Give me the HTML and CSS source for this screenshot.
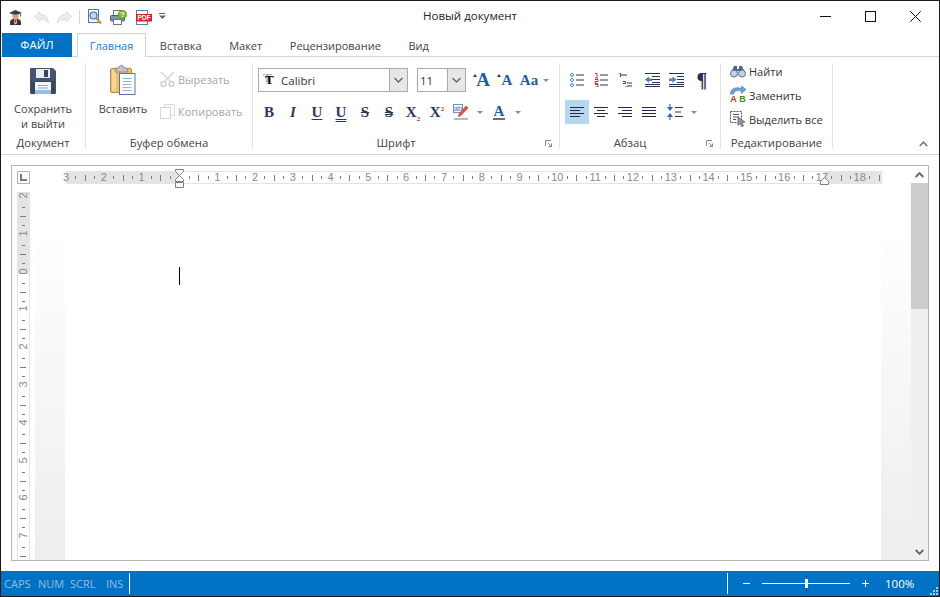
FILE: index.html
```html
<!DOCTYPE html>
<html lang="ru">
<head>
  <meta charset="UTF-8" />
  <title>Новый документ</title>
  <link rel="stylesheet" href="styles.css">
</head>
<body>
  <div class="window">

    <!-- title bar -->
    <div class="titlebar">
      <div class="qat">
        <svg class="qat-user" width="13" height="15" viewBox="0 0 13 15">
          <path d="M0 3 6.500 0 13 3 6.500 5.500z" fill="#3c3c44"/>
          <path d="M3.500 4.500h6v3.500a3 3 0 0 1-6 0z" fill="#d9a27e"/>
          <path d="M1 15v-3c0-2 2-3 3.500-3h4c1.500 0 3.500 1 3.500 3v3z" fill="#33363f"/>
          <path d="M5.500 9h2l.5 4-1.500 1.500L5 13z" fill="#e6e6e6"/>
          <path d="M6 9.500h1l.3 3-.8.800-.8-.800z" fill="#a5352b"/>
          <path d="M11.500 3.500v3" stroke="#8a6a3a" fill="none"/>
        </svg>
        <svg class="qat-undo" width="15" height="13" viewBox="0 0 15 13">
          <path d="M.5 5.500 6 .5v3c5 0 8 2.500 8.500 8.500-1.500-3-4-4-8.500-4v3z" fill="#eeeeee" stroke="#dcdcdc"/>
        </svg>
        <svg class="qat-redo" width="15" height="13" viewBox="0 0 15 13">
          <path d="M14.500 5.500 9 .5v3c-5 0-8 2.500-8.500 8.500 1.500-3 4-4 8.500-4v3z" fill="#eeeeee" stroke="#dcdcdc"/>
        </svg>
        <span class="qat-sep"></span>
        <svg class="qat-preview" width="14" height="16" viewBox="0 0 14 16">
          <rect x=".5" y=".5" width="10" height="13" fill="#fff" stroke="#4f76a8"/>
          <circle cx="5.500" cy="6.500" r="3.500" fill="#bcdcf2" stroke="#3f6ea5" stroke-width="1.200"/>
          <path d="M8.500 9.500 13 14.500" stroke="#c98a3a" stroke-width="2"/>
        </svg>
        <svg class="qat-print" width="17" height="15" viewBox="0 0 17 15">
          <rect x="3.500" y=".5" width="8" height="5" fill="#fff" stroke="#6b7a8f"/>
          <rect x=".5" y="5.500" width="14" height="5.500" rx="1" fill="#8495aa" stroke="#4d5d74"/>
          <rect x="3.500" y="9.500" width="8" height="5" fill="#fff" stroke="#6b7a8f"/>
          <circle cx="12.500" cy="4.500" r="4.300" fill="#76b82a" stroke="#4f8a16" stroke-width=".6"/>
          <text x="12.500" y="7.300" class="svg-q">?</text>
        </svg>
        <svg class="qat-pdf" width="16" height="15" viewBox="0 0 16 15">
          <rect x=".5" y=".5" width="11" height="14" fill="#fff" stroke="#5b7fae"/>
          <rect x="0" y="4" width="16" height="7.500" fill="#c8262a"/>
          <text x="8" y="10.300" class="svg-pdf">PDF</text>
        </svg>
        <svg class="qat-more" width="7" height="6" viewBox="0 0 7 6">
          <path d="M0 .5h6" stroke="#666"/>
          <path d="M0 2.500h7L3.500 6z" fill="#666"/>
        </svg>
      </div>
      <div class="doc-title">Новый документ</div>
      <div class="win-controls">
        <div class="win-btn">
          <svg width="11" height="11" viewBox="0 0 11 11"><path d="M0 5.500h11" stroke="#111"/></svg>
        </div>
        <div class="win-btn">
          <svg width="11" height="11" viewBox="0 0 11 11"><rect x=".5" y=".5" width="10" height="10" fill="none" stroke="#111"/></svg>
        </div>
        <div class="win-btn">
          <svg width="11" height="11" viewBox="0 0 11 11"><path d="M.3.300 10.700 10.700M10.700.300.300 10.700" stroke="#111"/></svg>
        </div>
      </div>
    </div>

    <!-- tabs -->
    <div class="tabs">
      <div class="tab-file">ФАЙЛ</div>
      <div class="tab active">Главная</div>
      <div class="tab">Вставка</div>
      <div class="tab">Макет</div>
      <div class="tab">Рецензирование</div>
      <div class="tab">Вид</div>
    </div>

    <!-- ribbon -->
    <div class="ribbon">

      <div class="group group-doc">
        <div class="group-body big-btn">
          <svg width="26" height="26" viewBox="0 0 26 26">
            <path d="M1 0h22l3 3v22a1 1 0 0 1-1 1H1a1 1 0 0 1-1-1V1a1 1 0 0 1 1-1z" fill="#47536f"/>
            <path d="M1 13h24v12a1 1 0 0 1-1 1H2a1 1 0 0 1-1-1z" fill="#3a4560"/>
            <rect x="6" y="1" width="14" height="9" fill="#e9edf3"/>
            <rect x="14" y="2" width="4" height="7" fill="#3a4560"/>
            <rect x="5" y="14" width="16" height="12" fill="#f2f4f7"/>
            <path d="M8 17.500h10M8 20h10" stroke="#9aa6b8"/>
            <rect x="5" y="22" width="16" height="4" fill="#8fc0ea"/>
          </svg>
          <div class="big-label">Сохранить<br>и выйти</div>
        </div>
        <div class="group-label">Документ</div>
      </div>

      <div class="group group-clip">
        <div class="group-body clip-body">
          <div class="big-btn paste-btn">
            <svg width="26" height="30" viewBox="0 0 26 30">
              <rect x=".5" y="3.500" width="21" height="24" rx="1.500" fill="#eebd6c" stroke="#b58b4a"/>
              <path d="M2 5h4v21H2z" fill="#f6d595"/>
              <path d="M6 5V3h3a2.500 2.500 0 0 1 5 0h3v2l1 2H5z" fill="#c3c7cf" stroke="#878c97"/>
              <rect x="9.500" y="8.500" width="15.500" height="21" fill="#fff" stroke="#5a76a8"/>
              <path d="M12.500 13.500h9M12.500 16.500h9M12.500 19.500h9M12.500 22.500h9M12.500 25.500h9" stroke="#9fb0cc"/>
            </svg>
            <div class="big-label paste-label">Вставить</div>
          </div>
          <div class="clip-list">
            <div class="clip-item">
              <svg width="15" height="15" viewBox="0 0 15 15">
                <path d="M1 0 10 9M14 0 5 9" stroke="#d8d8d8" stroke-width="1.600"/>
                <circle cx="3.500" cy="12" r="2.500" fill="#fff" stroke="#cfcfcf" stroke-width="1.400"/>
                <circle cx="11.500" cy="12" r="2.500" fill="#fff" stroke="#cfcfcf" stroke-width="1.400"/>
              </svg>
              <span>Вырезать</span>
            </div>
            <div class="clip-item">
              <svg width="15" height="15" viewBox="0 0 15 15">
                <rect x="4.500" y=".5" width="10" height="11" fill="#fafafa" stroke="#dcdcdc"/>
                <rect x=".5" y="3.500" width="10" height="11" fill="#fff" stroke="#d6d6d6"/>
              </svg>
              <span>Копировать</span>
            </div>
          </div>
        </div>
        <div class="group-label">Буфер обмена</div>
      </div>

      <div class="group group-font">
        <div class="group-body">
          <div class="font-row">
            <div class="combo combo-name">
              <span class="combo-ttf">T</span>
              <span class="combo-text">Calibri</span>
              <span class="combo-arrow">
                <svg width="9" height="6" viewBox="0 0 9 6"><path d="M.5 1 4.500 5 8.500 1" fill="none" stroke="#666" stroke-width="1.400"/></svg>
              </span>
            </div>
            <div class="combo combo-size">
              <span class="combo-text">11</span>
              <span class="combo-arrow">
                <svg width="9" height="6" viewBox="0 0 9 6"><path d="M.5 1 4.500 5 8.500 1" fill="none" stroke="#666" stroke-width="1.400"/></svg>
              </span>
            </div>
            <div class="btn glyph-blue"><span class="caret"></span><span class="grow-a">A</span></div>
            <div class="btn glyph-blue"><span class="caret"></span><span class="shrink-a">A</span></div>
            <div class="btn glyph-blue case-aa">Aa</div>
            <div class="drop"></div>
          </div>
          <div class="font-row row-tools">
            <div class="btn glyph">B</div>
            <div class="btn glyph glyph-i">I</div>
            <div class="btn glyph glyph-u">U</div>
            <div class="btn glyph glyph-uu">U</div>
            <div class="btn glyph glyph-s">S</div>
            <div class="btn glyph glyph-ss">S</div>
            <div class="btn glyph glyph-x"><span>X<sub>2</sub></span></div>
            <div class="btn glyph glyph-x"><span>X<sup>2</sup></span></div>
            <div class="btn">
              <svg width="16" height="16" viewBox="0 0 16 16">
                <rect x=".5" y=".5" width="9" height="8" fill="#fff" stroke="#6f8fbf"/>
                <text x="5" y="7" class="svg-ab">ab</text>
                <path d="M13 2 15 4 8 11.500 5.500 12.500 6 10z" fill="#e0524a" stroke="#b23a36" stroke-width=".6"/>
                <path d="M1 15h14" stroke="#b9b9b9" stroke-width="2"/>
              </svg>
            </div>
            <div class="drop drop-tight"></div>
            <div class="btn glyph-blue color-a"><span class="color-letter">A</span></div>
            <div class="drop drop-tight"></div>
          </div>
        </div>
        <div class="group-label label-offset">Шрифт</div>
        <svg class="launcher" width="7" height="7" viewBox="0 0 7 7"><path d="M.5 6V.5H6M3 3l3.500 3.500M6.500 3.500v3h-3" fill="none" stroke="#888"/></svg>
      </div>

      <div class="group group-para">
        <div class="group-body">
          <div class="para-row">
            <div class="btn">
              <svg width="14" height="14" viewBox="0 0 14 14">
                <g fill="#fff" stroke="#4f81bd"><circle cx="2" cy="2" r="1.500"/><circle cx="2" cy="7" r="1.500"/><circle cx="2" cy="12" r="1.500"/></g>
                <path d="M6 2h8M6 7h8M6 12h8" stroke="#2a3550"/>
              </svg>
            </div>
            <div class="btn">
              <svg width="14" height="14" viewBox="0 0 14 14">
                <path d="M1 .5h2v4M1 5h3M1 6.500h3v2H1v2h3M1 11.500h3v2.500H1" fill="none" stroke="#b3262a" stroke-width=".9"/>
                <path d="M6 2h8M6 7h8M6 12h8" stroke="#2a3550"/>
              </svg>
            </div>
            <div class="btn">
              <svg width="14" height="14" viewBox="0 0 14 14">
                <path d="M.5 0h2v4M5 8.500h2.500v2M5 10.500h2.500M8 13v1" fill="none" stroke="#b3262a"/>
                <path d="M3 2h6M9 10h5M9 13h5" stroke="#2a3550"/>
              </svg>
            </div>
            <div class="btn btn-shift">
              <svg width="15" height="14" viewBox="0 0 15 14">
                <path d="M0 .5h15M0 13.500h15M7 3.500h8M7 6.500h8M7 9.500h8M0 11.500h15" stroke="#2a3550"/>
                <path d="M0 6.500 4 3.500v2h3v2.500H4v2z" fill="#4f81bd"/>
              </svg>
            </div>
            <div class="btn">
              <svg width="15" height="14" viewBox="0 0 15 14">
                <path d="M0 .5h15M0 13.500h15M8 3.500h7M8 6.500h7M8 9.500h7M0 11.500h15" stroke="#2a3550"/>
                <path d="M7.500 6.500 3.500 3.500v2H0v2.500h3.500v2z" fill="#4f81bd"/>
              </svg>
            </div>
            <div class="btn btn-pil glyph glyph-pil">¶</div>
          </div>
          <div class="para-row row-tools">
            <div class="btn btn-on">
              <svg width="14" height="12" viewBox="0 0 14 12"><path d="M0 1.500h14M0 4.500h10M0 7.500h14M0 10.500h10" stroke="#1f2a44"/></svg>
            </div>
            <div class="btn">
              <svg width="14" height="12" viewBox="0 0 14 12"><path d="M0 1.500h14M3 4.500h8M0 7.500h14M3 10.500h8" stroke="#1f2a44"/></svg>
            </div>
            <div class="btn">
              <svg width="14" height="12" viewBox="0 0 14 12"><path d="M0 1.500h14M4 4.500h10M0 7.500h14M4 10.500h10" stroke="#1f2a44"/></svg>
            </div>
            <div class="btn">
              <svg width="14" height="12" viewBox="0 0 14 12"><path d="M0 1.500h14M0 4.500h14M0 7.500h14M0 10.500h14" stroke="#1f2a44"/></svg>
            </div>
            <div class="btn btn-line">
              <svg width="16" height="16" viewBox="0 0 16 16">
                <path d="M3 0v4M3 12v4" stroke="#2f5f9e"/>
                <path d="M0 3h6L3 7zM0 13h6L3 9z" fill="#2f67b0"/>
                <path d="M8 3.500h8M8 8h6M8 12.500h8" stroke="#2a3550"/>
              </svg>
            </div>
            <div class="drop drop-tight"></div>
          </div>
        </div>
        <div class="group-label label-offset">Абзац</div>
        <svg class="launcher" width="7" height="7" viewBox="0 0 7 7"><path d="M.5 6V.5H6M3 3l3.500 3.500M6.500 3.500v3h-3" fill="none" stroke="#888"/></svg>
      </div>

      <div class="group group-edit">
        <div class="group-body edit-list">
          <div class="edit-item">
            <svg width="16" height="13" viewBox="0 0 16 13">
              <path d="M4 1h3v3h2V1h3l3 7H9V6H7v2H1z" fill="#56657c"/>
              <circle cx="4" cy="8.500" r="3.500" fill="#bcd3ea" stroke="#5b6f8d"/>
              <circle cx="12" cy="8.500" r="3.500" fill="#bcd3ea" stroke="#5b6f8d"/>
            </svg>
            <span>Найти</span>
          </div>
          <div class="edit-item">
            <svg class="replace-ico" width="16" height="20" viewBox="0 0 16 20">
              <path d="M.5 9C.5 3.500 6 1.500 11.500 3.500V1L16 4.500 11.500 8.500V6C7 4.800 4 6 3.500 9z" fill="#6aa3d5" stroke="#3f79ad" stroke-width=".6"/>
              <text x="3.500" y="16.500" class="svg-abc svg-a">A</text>
              <text x="12.500" y="16.500" class="svg-abc svg-b">B</text>
            </svg>
            <span>Заменить</span>
          </div>
          <div class="edit-item">
            <svg width="16" height="16" viewBox="0 0 16 16">
              <rect x=".5" y=".5" width="11" height="11" fill="none" stroke="#555" stroke-dasharray="2 1"/>
              <path d="M3 3.500h6M3 6h6M3 8.500h3" stroke="#555"/>
              <path d="M8 6 8 14.500 10 12.500 12 16 13.500 15 12 11.500 15 11z" fill="#8d98a8" stroke="#4d5866" stroke-width=".7"/>
            </svg>
            <span>Выделить все</span>
          </div>
        </div>
        <div class="group-label">Редактирование</div>
      </div>

      <svg class="collapse" width="9" height="6" viewBox="0 0 9 6"><path d="M.7 5 4.500 1.200 8.300 5" fill="none" stroke="#777" stroke-width="1.600"/></svg>
    </div>

    <!-- document -->
    <div class="doc-area">
      <div class="doc-frame">
        <div class="doc-main">
          <div class="ruler-row">
            <div class="ruler-corner">
              <svg width="7" height="7" viewBox="0 0 7 7"><path d="M1 0v6h6" fill="none" stroke="#777" stroke-width="2"/></svg>
            </div>
            <div class="hruler">
              <span class="cm"><i>3</i></span><span class="cm"><i>2</i></span><span class="cm"><i>1</i></span><span class="cm cm-blank"></span>
              <span class="cm"><i>1</i></span><span class="cm"><i>2</i></span><span class="cm"><i>3</i></span><span class="cm"><i>4</i></span>
              <span class="cm"><i>5</i></span><span class="cm"><i>6</i></span><span class="cm"><i>7</i></span><span class="cm"><i>8</i></span>
              <span class="cm"><i>9</i></span><span class="cm"><i>10</i></span><span class="cm"><i>11</i></span><span class="cm"><i>12</i></span>
              <span class="cm"><i>13</i></span><span class="cm"><i>14</i></span><span class="cm"><i>15</i></span><span class="cm"><i>16</i></span>
              <span class="cm"><i>17</i></span><span class="cm cm-last"><i>18</i></span>
              <svg class="indent-left" width="10" height="20" viewBox="0 0 10 20">
                <path d="M.5.500h8v2L4.500 6.500.5 2.500zM4.500 6.500l4 4v2h-8v-2zM.5 13.500h8v5h-8z" fill="#fff" stroke="#808080"/>
              </svg>
              <svg class="indent-right" width="10" height="8" viewBox="0 0 10 8">
                <path d="M4.500.5l4 4v3h-8v-3z" fill="#fff" stroke="#808080"/>
              </svg>
            </div>
          </div>
          <div class="doc-body">
            <div class="vruler">
              <span class="vcm"><i>2</i></span><span class="vcm"><i>1</i></span><span class="vcm"><i>0</i></span>
              <span class="vcm"><i>1</i></span><span class="vcm"><i>2</i></span><span class="vcm"><i>3</i></span>
              <span class="vcm"><i>4</i></span><span class="vcm"><i>5</i></span><span class="vcm"><i>6</i></span>
              <span class="vcm"><i>7</i></span>
            </div>
            <div class="page-edge"></div>
            <div class="page"><div class="caret-line"></div></div>
            <div class="page-edge"></div>
          </div>
        </div>
        <div class="scrollbar">
          <div class="scroll-btn">
            <svg width="9" height="6" viewBox="0 0 9 6"><path d="M.7 5 4.500 1.200 8.300 5" fill="none" stroke="#606060" stroke-width="1.800"/></svg>
          </div>
          <div class="scroll-thumb"></div>
          <div class="scroll-track"></div>
          <div class="scroll-btn">
            <svg width="9" height="6" viewBox="0 0 9 6"><path d="M.7 1 4.500 4.800 8.300 1" fill="none" stroke="#606060" stroke-width="1.800"/></svg>
          </div>
        </div>
      </div>
    </div>

    <!-- status bar -->
    <div class="statusbar">
      <div class="keys">
        <span>CAPS</span>
        <span>NUM</span>
        <span>SCRL</span>
        <span>INS</span>
      </div>
      <div class="status-sep"></div>
      <div class="status-space"></div>
      <div class="status-sep"></div>
      <div class="zoom-minus"></div>
      <div class="zoom-slider"><div class="zoom-thumb"></div></div>
      <div class="zoom-plus"></div>
      <div class="zoom-value">100%</div>
      <svg class="grip" width="8" height="8" viewBox="0 0 8 8">
        <path d="M6 0h2v2H6zM3 3h2v2H3zM6 3h2v2H6zM0 6h2v2H0zM3 6h2v2H3zM6 6h2v2H6z" fill="#a9cde9"/>
      </svg>
    </div>

  </div>
</body>
</html>
```

FILE: styles.css
```css
html, body {
  margin: 0;
  padding: 0;
  background: #fff;
}

body {
  font-family: "Open Sans", "Noto Sans", sans-serif;
  font-size: 11px;
  color: #444;
}

.window {
  width: 940px;
  height: 597px;
  box-sizing: border-box;
  border: 1px solid #1b1b1b;
  display: flex;
  flex-direction: column;
  overflow: hidden;
  background: #fff;
}

/* title bar */
.titlebar {
  height: 32px;
  flex: none;
  display: flex;
  align-items: center;
  position: relative;
}

.qat {
  display: flex;
  align-items: center;
  padding-left: 8px;
}

.qat-undo { margin-left: 12px; }
.qat-redo { margin-left: 8px; }
.qat-preview { margin-left: 8px; }
.qat-print { margin-left: 8px; }
.qat-pdf { margin-left: 9px; }
.qat-more { margin-left: 7px; margin-top: -2px; }

.qat-sep {
  width: 1px;
  height: 14px;
  background: #d8d8d8;
  margin-left: 7px;
}

.svg-q {
  font: bold 8px "Liberation Sans", sans-serif;
  fill: #fff;
  text-anchor: middle;
}

.svg-pdf {
  font: bold 6.5px "Liberation Sans", sans-serif;
  fill: #fff;
  text-anchor: middle;
}

.doc-title {
  position: absolute;
  left: 0;
  right: 0;
  top: 0;
  line-height: 30px;
  text-align: center;
  font-size: 11.5px;
  color: #222;
}

.win-controls {
  margin-left: auto;
  margin-right: 1px;
  display: flex;
}

.win-btn {
  width: 45px;
  height: 30px;
  display: flex;
  align-items: center;
  justify-content: center;
  margin-top: -2px;
}

/* tabs */
.tabs {
  height: 24px;
  flex: none;
  box-sizing: border-box;
  border-bottom: 1px solid #d4d4d4;
  display: flex;
  align-items: flex-start;
  padding-left: 1px;
}

.tab-file {
  width: 70px;
  height: 24px;
  flex: none;
  background: #0072c6;
  color: #fff;
  text-align: center;
  font-size: 11.5px;
  line-height: 24px;
  margin-right: 5px;
}

.tab {
  height: 24px;
  box-sizing: border-box;
  padding: 0 12.8px;
  line-height: 24px;
  border: 1px solid transparent;
  border-bottom: 0;
}

.tab.active {
  width: 69px;
  padding: 0;
  text-align: center;
  background: #fff;
  color: #2b7cc9;
  border-color: #cfcfcf;
}

/* ribbon */
.ribbon {
  height: 98px;
  flex: none;
  box-sizing: border-box;
  border-bottom: 1px solid #d4d4d4;
  padding-top: 6px;
  display: flex;
  position: relative;
}

.group {
  height: 85px;
  flex: none;
  box-sizing: border-box;
  border-right: 1px solid #e2e2e2;
  display: flex;
  flex-direction: column;
  position: relative;
}

.group-body {
  flex: 1;
  min-height: 0;
  padding-top: 5px;
}

.group-label {
  line-height: 14px;
  margin-bottom: -2px;
  text-align: center;
  font-size: 11.3px;
  color: #444;
}

.label-offset {
  padding-right: 20px;
}

.group-doc { width: 85px; }
.group-clip { width: 167px; }
.group-font { width: 307px; }
.group-para { width: 161px; }
.group-edit { width: 112px; }

.big-btn {
  display: flex;
  flex-direction: column;
  align-items: center;
}

.big-label {
  margin-top: 7px;
  line-height: 15px;
  text-align: center;
}

.clip-body {
  display: flex;
  padding-top: 2px;
}

.paste-btn {
  width: 74px;
  flex: none;
}

.paste-label {
  margin-top: 6px;
}

.clip-list {
  display: flex;
  flex-direction: column;
  margin-top: -2px;
}

.clip-item {
  height: 32px;
  display: flex;
  align-items: center;
  gap: 3px;
  color: #a6a6a6;
}

.font-row {
  display: flex;
  height: 24px;
  padding-left: 5px;
  align-items: center;
}

.row-tools {
  margin-top: 8px;
  padding-left: 4px;
}

.combo {
  height: 24px;
  flex: none;
  box-sizing: border-box;
  border: 1px solid #ababab;
  display: flex;
  align-items: center;
  font-size: 11.5px;
}

.combo-name {
  width: 150px;
  margin-right: 9px;
}

.combo-size {
  width: 49px;
  margin-right: 3px;
}

.combo-ttf {
  width: 22px;
  flex: none;
  padding-left: 6px;
  box-sizing: border-box;
  font: bold 13px/14px "Liberation Serif", serif;
  color: #000;
  text-shadow: -2px -2px 0 #aaa;
}

.combo-text {
  flex: 1;
  color: #333;
}

.combo-size .combo-text {
  padding-left: 2px;
}

.combo-arrow {
  width: 17px;
  height: 22px;
  flex: none;
  background: #e7e7e7;
  border-left: 1px solid #ababab;
  display: flex;
  align-items: center;
  justify-content: center;
}

.btn {
  width: 24px;
  height: 24px;
  flex: none;
  display: flex;
  align-items: center;
  justify-content: center;
  position: relative;
}

.glyph {
  font: bold 15px "Liberation Serif", serif;
  color: #2b3a5c;
}

.glyph-blue {
  font-family: "Liberation Serif", serif;
  font-weight: bold;
  color: #1f5c9e;
}

.grow-a { font-size: 19px; margin-left: 4px; }
.shrink-a { font-size: 15px; margin-left: 4px; }
.case-aa { font-size: 15px; }

.caret {
  width: 0;
  height: 0;
  border: 2px solid transparent;
  border-top: 0;
  border-bottom: 3px solid #1f3c66;
  position: absolute;
  left: 4px;
  top: 6px;
}

.drop {
  width: 10px;
  height: 24px;
  flex: none;
  position: relative;
}

.drop::after {
  content: "";
  position: absolute;
  left: 2px;
  top: 11px;
  border: 3px solid transparent;
  border-top-color: #8a8a8a;
  border-bottom: 0;
}

.drop-tight {
  width: 14px;
}

.drop-tight::after {
  left: 4px;
}

.glyph-i { font-style: italic; }

.glyph-u, .glyph-uu {
  text-decoration: underline;
  text-underline-offset: 2px;
}

.glyph-uu {
  text-decoration-style: double;
}

.glyph-s, .glyph-ss {
  text-decoration: line-through;
}

.glyph-ss {
  text-decoration-style: double;
}

.glyph-x sub, .glyph-x sup {
  font-size: 7px;
  color: #b3262a;
  line-height: 0;
}

.color-a {
  font: bold 15px "Liberation Serif", serif;
  color: #1f5c9e;
}

.color-letter {
  border-bottom: 2px solid #6f6f6f;
  line-height: 14px;
  padding: 0 1px;
}

.svg-ab {
  font: 7px "Liberation Sans", sans-serif;
  fill: #3a66a8;
  text-anchor: middle;
}

.launcher {
  position: absolute;
  right: 7px;
  bottom: 1px;
}

.para-row {
  display: flex;
  height: 24px;
  padding-left: 5px;
}

.para-row.row-tools {
  padding-left: 5px;
}

.btn-shift { margin-left: 3px; }
.btn-pil { margin-left: 2px; }
.btn-line { margin-left: 2px; }

.btn-on {
  background: #b5d7f0;
}

.glyph-pil {
  font-size: 20px;
  color: #26324d;
}

.edit-list {
  padding-top: 0;
  margin-top: -4px;
  padding-left: 9px;
  display: flex;
  flex-direction: column;
}

.edit-item {
  height: 24px;
  display: flex;
  align-items: center;
  gap: 3px;
  color: #333;
}

.svg-abc {
  font: bold 9px "Liberation Sans", sans-serif;
  text-anchor: middle;
}

.svg-a { fill: #c62b2b; }
.svg-b { fill: #3f8a1c; }

.collapse {
  position: absolute;
  right: 11px;
  bottom: 7px;
}

/* document area */
.doc-area {
  flex: 1;
  min-height: 0;
  padding: 10px;
  display: flex;
}

.doc-frame {
  flex: 1;
  box-sizing: border-box;
  border: 1px solid #b6b6b6;
  display: flex;
  min-width: 0;
}

.doc-main {
  flex: 1;
  min-width: 0;
  display: flex;
  flex-direction: column;
}

.ruler-row {
  display: flex;
  padding: 5px 0 0 5px;
  height: 13px;
  flex: none;
}

.ruler-corner {
  width: 13px;
  height: 13px;
  flex: none;
  box-sizing: border-box;
  border: 1px solid #b3b3b3;
  display: flex;
  align-items: center;
  justify-content: center;
}

.hruler {
  width: 816px;
  height: 13px;
  margin-left: 36px;
  box-sizing: border-box;
  display: flex;
  position: relative;
  background: linear-gradient(to right, #e4e4e4 114px, #fff 114px, #fff 758px, #e4e4e4 758px);
  box-shadow: inset 0 0 0 1px #e4e4e4;
}

.cm {
  width: 37.8px;
  height: 13px;
  flex: none;
  background-image:
    linear-gradient(#7d7d7d, #7d7d7d),
    linear-gradient(#7d7d7d, #7d7d7d),
    linear-gradient(#7d7d7d, #7d7d7d);
  background-repeat: no-repeat;
  background-size: 1px 3px, 1px 6px, 1px 3px;
  background-position: 9.4px 5px, 18.9px 3.5px, 28.3px 5px;
}

.cm-last {
  width: 20px;
}

.cm i {
  display: block;
  width: 14px;
  margin-left: -7px;
  text-align: center;
  font: 11px/13px "Liberation Sans", sans-serif;
  color: #8a8a8a;
}

.indent-left {
  position: absolute;
  left: 109px;
  top: -2px;
}

.indent-right {
  position: absolute;
  left: 754px;
  top: 6px;
}

.doc-body {
  flex: 1;
  min-height: 0;
  display: flex;
  padding-top: 8px;
}

.vruler {
  width: 13px;
  flex: none;
  margin: 0 5px;
  box-sizing: border-box;
  overflow: hidden;
  padding-top: 3px;
  display: flex;
  flex-direction: column;
  background: linear-gradient(#e4e4e4 82px, #fff 82px);
  box-shadow: inset 1px 0 0 #e4e4e4, inset -1px 0 0 #e4e4e4;
}

.vcm {
  height: 37.8px;
  flex: none;
  background-image:
    linear-gradient(#7d7d7d, #7d7d7d),
    linear-gradient(#7d7d7d, #7d7d7d),
    linear-gradient(#7d7d7d, #7d7d7d);
  background-repeat: no-repeat;
  background-size: 3px 1px, 6px 1px, 3px 1px;
  background-position: 5px 12px, 3px 21px, 5px 30px;
}

.vcm i {
  display: block;
  height: 9px;
  margin-top: -4px;
  text-align: center;
  font: 11px/9px "Liberation Sans", sans-serif;
  color: #8a8a8a;
  transform: rotate(-90deg);
}

.page-edge {
  width: 30px;
  flex: none;
  background: linear-gradient(#fff 10%, #eeeeee 95%);
}

.page {
  flex: 1;
  min-width: 0;
  padding: 75px 0 0 114px;
  background: #fff;
}

.caret-line {
  width: 1px;
  height: 18px;
  background: #000;
}

/* scrollbar */
.scrollbar {
  width: 17px;
  flex: none;
  display: flex;
  flex-direction: column;
}

.scroll-btn {
  height: 17px;
  flex: none;
  background: #efefef;
  display: flex;
  align-items: center;
  justify-content: center;
}

.scrollbar .scroll-btn:first-child {
  background: #fff;
}

.scroll-thumb {
  height: 126px;
  flex: none;
  background: #cccccc;
}

.scroll-track {
  flex: 1;
  background: #efefef;
}

/* status bar */
.statusbar {
  height: 25px;
  flex: none;
  background: #0072c6;
  display: flex;
  align-items: center;
  color: #fff;
  position: relative;
}

.keys {
  display: grid;
  grid-template-columns: 34px 32px 36px 17px;
  padding-left: 3px;
  color: #94bcdc;
}

.status-sep {
  width: 1px;
  height: 21px;
  background: #fff;
  flex: none;
  margin-left: 6px;
}

.status-space {
  flex: 1;
}

.zoom-minus {
  width: 7px;
  height: 1px;
  background: #fff;
  margin-left: 15px;
}

.zoom-slider {
  width: 88px;
  height: 1px;
  margin-left: 12px;
  background: #fff;
  position: relative;
}

.zoom-thumb {
  position: absolute;
  left: 43px;
  top: -4px;
  width: 3px;
  height: 9px;
  background: #fff;
}

.zoom-thumb::before,
.zoom-thumb::after {
  content: "";
  position: absolute;
  left: 1px;
  width: 1px;
  height: 1px;
  background: #111;
}

.zoom-thumb::before { top: -3px; }
.zoom-thumb::after { bottom: -3px; }

.zoom-plus {
  width: 7px;
  height: 7px;
  margin-left: 12px;
  background:
    linear-gradient(#fff, #fff) center / 7px 1px no-repeat,
    linear-gradient(#fff, #fff) center / 1px 7px no-repeat;
}

.zoom-value {
  width: 29px;
  margin-left: 16px;
  margin-right: 25px;
  color: #fff;
  font-size: 11.5px;
}

.grip {
  position: absolute;
  right: 1px;
  bottom: 1px;
}
```
